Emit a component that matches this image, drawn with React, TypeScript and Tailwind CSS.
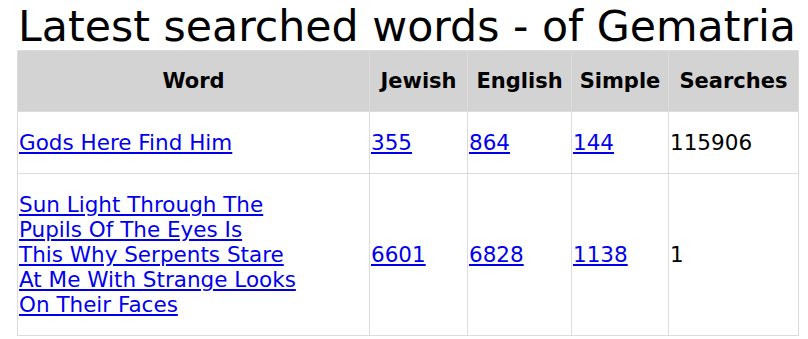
import React from "react";

const rows = [
  { lines: ["Gods Here Find Him"], jewish: "355", english: "864", simple: "144", searches: "115906" },
  {
    lines: ["Sun Light Through The", "Pupils Of The Eyes Is", "This Why Serpents Stare", "At Me With Strange Looks", "On Their Faces"],
    jewish: "6601",
    english: "6828",
    simple: "1138",
    searches: "1",
  },
];

export default function App() {
  return (
    <div className="bg-white min-h-screen pl-[17px] pt-[3px] text-black" style={{ fontFamily: '"DejaVu Sans", Verdana, sans-serif' }}>
      <h1 className="text-[42.7px] leading-[47px] pl-[1px]">Latest searched words - of Gematria</h1>
      <table className="border-collapse text-[21.5px] leading-[25px] table-fixed w-[781px]">
        <thead>
          <tr className="bg-[#d3d3d3]">
            <th className="w-[352px] h-[61px] border border-[#dcdcdc] font-bold text-[21px]">Word</th>
            <th className="w-[98px] border border-[#dcdcdc] font-bold text-[21px]">Jewish</th>
            <th className="w-[104px] border border-[#dcdcdc] font-bold text-[21px]">English</th>
            <th className="w-[97px] border border-[#dcdcdc] font-bold text-[21px]">Simple</th>
            <th className="w-[130px] border border-[#dcdcdc] font-bold text-[21px]">Searches</th>
          </tr>
        </thead>
        <tbody>
          {rows.map((r) => (
            <tr key={r.jewish}>
              <td className="border border-[#dcdcdc] py-[18px] pl-[1px] align-middle">
                <a href="#" className="text-[#0000ee] underline">
                  {r.lines.map((l, i) => (
                    <React.Fragment key={i}>
                      {i > 0 && <br />}
                      {l}
                    </React.Fragment>
                  ))}
                </a>
              </td>
              <td className="border border-[#dcdcdc] pl-[1px] align-middle">
                <a href="#" className="text-[#0000ee] underline">{r.jewish}</a>
              </td>
              <td className="border border-[#dcdcdc] pl-[1px] align-middle">
                <a href="#" className="text-[#0000ee] underline">{r.english}</a>
              </td>
              <td className="border border-[#dcdcdc] pl-[1px] align-middle">
                <a href="#" className="text-[#0000ee] underline">{r.simple}</a>
              </td>
              <td className="border border-[#dcdcdc] pl-[1px] align-middle">{r.searches}</td>
            </tr>
          ))}
        </tbody>
      </table>
    </div>
  );
}
